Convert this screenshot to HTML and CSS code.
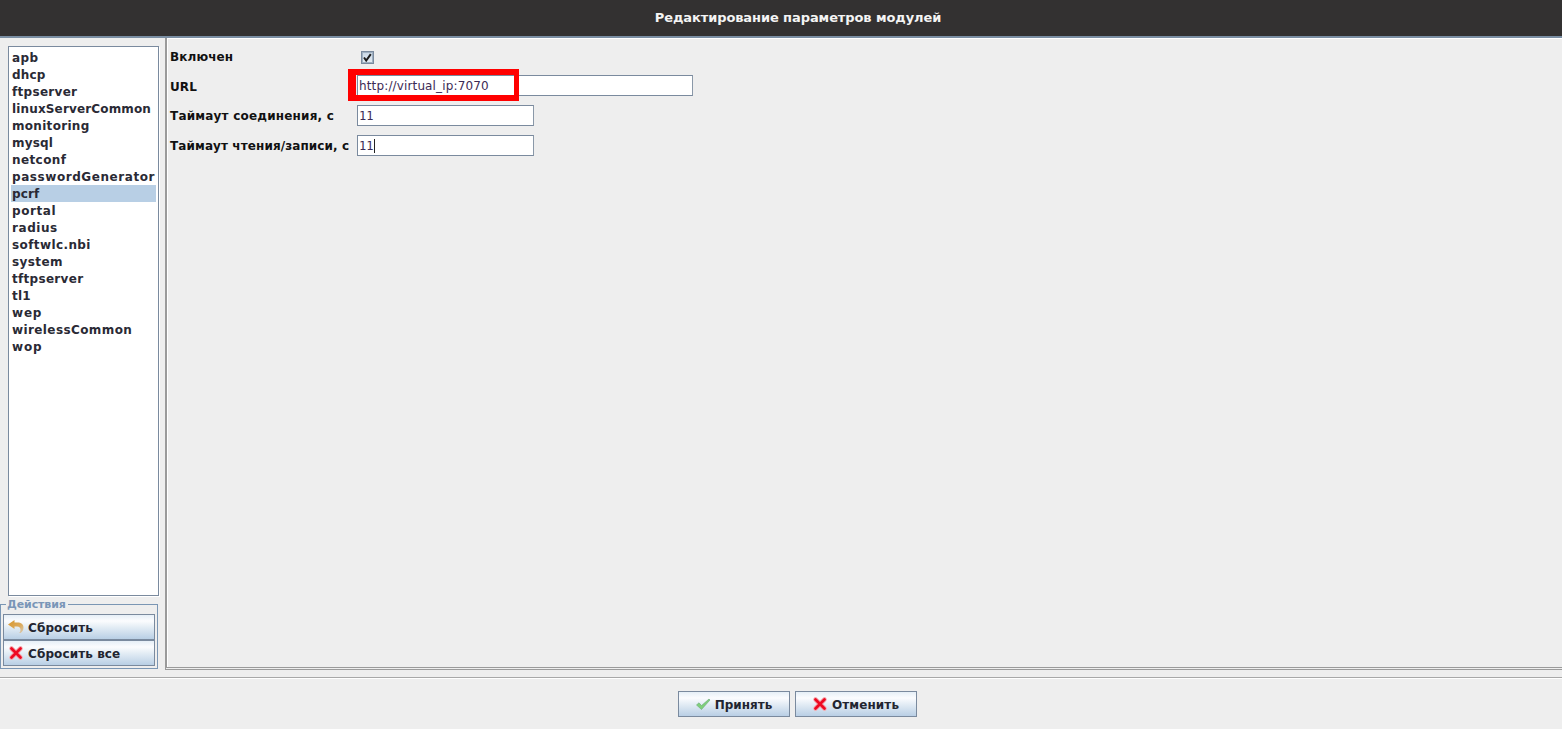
FILE: index.html
```html
<!DOCTYPE html>
<html lang="ru">
<head>
<meta charset="utf-8">
<title>Редактирование параметров модулей</title>
<link rel="stylesheet" href="styles.css">
</head>
<body>
<div class="app">
  <header class="titlebar">Редактирование параметров модулей</header>
  <div class="main">
    <aside class="side">
      <ul class="list">
        <li class="sp3">apb</li><li>dhcp</li><li class="sp2">ftpserver</li><li>linuxServerCommon</li><li class="sp2">monitoring</li><li>mysql</li><li class="sp3">netconf</li><li class="sp5">passwordGenerator</li><li class="sel">pcrf</li><li class="sp5">portal</li><li class="sp5">radius</li><li class="sp3">softwlc.nbi</li><li class="sp3">system</li><li class="sp2">tftpserver</li><li>tl1</li><li class="sp8">wep</li><li class="sp3">wirelessCommon</li><li class="sp8">wop</li>
      </ul>
      <fieldset class="actions">
        <legend>Действия</legend>
        <button class="btn side-btn" type="button">
          <svg class="ico" viewBox="0 0 16 16"><defs><linearGradient id="u" x1="0" y1="0" x2="1" y2="1"><stop offset="0" stop-color="#d8962c"/><stop offset=".6" stop-color="#dcaa5c"/><stop offset="1" stop-color="#d8cdb8"/></linearGradient></defs><path d="M6.500 1 0 5.500l6.500 4.500V7.500H9c2.500 0 3.500 1.500 3.500 3.500 0 1.200-.5 2.300-1.500 3h1.500c2-1 3-3 3-5.500C15.500 5 13 3.500 9.500 3.500h-3z" fill="url(#u)"/></svg>
          <span class="side-label">Сбросить</span>
        </button>
        <button class="btn side-btn" type="button">
          <svg class="ico" viewBox="0 0 16 16"><path d="M3.500 3.500 12.500 12.500M12.500 3.500 3.500 12.500" fill="none" stroke="#f3aab0" stroke-width="4.600" stroke-linecap="round"/><path d="M3.500 3.500 12.500 12.500M12.500 3.500 3.500 12.500" fill="none" stroke="#ee0a22" stroke-width="2.800" stroke-linecap="round"/></svg>
          <span class="side-label">Сбросить все</span>
        </button>
      </fieldset>
    </aside>
    <section class="content">
      <div class="form">
        <label class="lbl row1">Включен</label>
        <div class="row1"><span class="check"><svg viewBox="0 0 11 11"><path d="M2 5.500 4.200 8.500 8.800 2.200" fill="none" stroke="#1c1c1c" stroke-width="2"/></svg></span></div>
        <label class="lbl row2">URL</label>
        <div class="row2 field-wrap"><div class="field wide">http://virtual_ip:7070</div><div class="mark"></div></div>
        <label class="lbl row3">Таймаут соединения, с</label>
        <div class="row3"><div class="field narrow">11</div></div>
        <label class="lbl row4">Таймаут чтения/записи, с</label>
        <div class="row4"><div class="field narrow">11<span class="caret"></span></div></div>
      </div>
    </section>
  </div>
  <footer class="footer">
    <button class="btn foot-btn" type="button">
      <svg class="ico" viewBox="0 0 16 16"><path d="M1.500 9 4 6.800l2.500 2.800L14 3l1 1-8.500 9.500z" fill="#7fd07a" stroke="#6aa878" stroke-width=".6"/></svg>
      Принять
    </button>
    <button class="btn foot-btn" type="button">
      <svg class="ico" viewBox="0 0 16 16"><path d="M3.500 3.500 12.500 12.500M12.500 3.500 3.500 12.500" fill="none" stroke="#f3aab0" stroke-width="4.600" stroke-linecap="round"/><path d="M3.500 3.500 12.500 12.500M12.500 3.500 3.500 12.500" fill="none" stroke="#ee0a22" stroke-width="2.800" stroke-linecap="round"/></svg>
      <span class="cancel-label">Отменить</span>
    </button>
  </footer>
</div>
</body>
</html>
```
FILE: styles.css
```css
* { box-sizing: border-box; }
html, body { margin: 0; padding: 0; height: 100%; }
body {
  background: #eeeeee;
  font-family: "DejaVu Sans", sans-serif;
  font-size: 12px;
  font-weight: bold;
  color: #222;
  overflow: hidden;
}
.app { width: 1562px; height: 729px; display: flex; flex-direction: column; }
.titlebar {
  height: 38px;
  flex: none;
  background: #333131;
  border-bottom: 2px solid #7a8ea3;
  color: #f4f4f4;
  font-size: 13px;
  letter-spacing: -.09px;
  padding-left: 34px;
  padding-bottom: 2px;
  display: flex;
  align-items: center;
  justify-content: center;
}
.main { height: 632px; flex: none; display: flex; }
.side {
  width: 165px;
  flex: none;
  padding: 8px 6px 0 0;
  display: flex;
  flex-direction: column;
}
.list {
  list-style: none;
  margin: 0 0 0 8px;
  padding: 2px 2px 0 2px;
  width: 151px;
  height: 550px;
  background: #fff;
  border: 1px solid #7a8a9e;
  box-shadow: 1px 1px 0 #fff;
}
.list li { height: 17px; line-height: 19px; padding-left: 1px; white-space: nowrap; letter-spacing: .15px; color: #2a2a35; }
.list li.sp2 { letter-spacing: .3px; }
.list li.sp3 { letter-spacing: .4px; }
.list li.sp5 { letter-spacing: .57px; }
.list li.sp8 { letter-spacing: .8px; }
.list li.sel { background: #b8cfe5; }
.actions {
  margin: 4px 0 0 0;
  padding: 5px 2px 0;
  width: 158px;
  height: 69px;
  border: 1px solid #7a96b4;
  min-width: 0;
  display: flex;
  flex-direction: column;
}
.actions legend {
  padding: 0 2px 0 1px;
  margin-left: 3px;
  font-size: 11px;
  line-height: 9px;
  letter-spacing: -.1px;
  color: #7a96b8;
}
.btn {
  display: flex;
  align-items: center;
  font: inherit;
  color: #222530;
  border: 1px solid #7a8a9e;
  background: linear-gradient(#e6eff7 0, #fbfcfe 25%, #e4edf5 50%, #b9cfe5 100%);
  padding: 2px 0 0;
  cursor: pointer;
}
.side-btn { width: 152px; height: 26px; padding-left: 4px; gap: 4px; margin: 0; flex: none; }
.side-label { letter-spacing: .1px; }
.cancel-label { letter-spacing: .1px; }
.ico { width: 16px; height: 16px; flex: none; margin-top: -2px; }
.content {
  flex: 1;
  border-left: 2px solid #9a9a9a;
  border-bottom: 3px double #9a9a9a;
  box-shadow: inset 1px 1px 0 #fff;
  padding: 2px 3px;
}
.form {
  display: grid;
  grid-template-columns: 187px 1fr;
  grid-template-rows: 30px 30px 30px 30px;
}
.lbl { align-self: center; color: #111; white-space: nowrap; letter-spacing: .1px; }
.row1.lbl, .row2.lbl { padding-top: 4px; }
.row3.lbl, .row4.lbl { padding-top: 2px; }
.row3.lbl { letter-spacing: .2px; }
.form > div { align-self: center; }
.form > .row1 { padding-top: 4px; }
.check {
  display: flex;
  width: 13px;
  height: 13px;
  margin-left: 4px;
  border: 1px solid #7a8a9e;
  box-shadow: inset 0 0 0 1px #9fb0c2;
  background: linear-gradient(#c8d6e4, #e6eef6);
}
.check svg { width: 11px; height: 11px; }
.field-wrap { position: relative; }
.field {
  height: 21px;
  background: #fff;
  border: 1px solid #7a8a9e;
  border-right-color: #8a98a8;
  font-weight: normal;
  font-size: 12px;
  line-height: 20px;
  padding-left: 1px;
  color: #3c2a55;
  letter-spacing: .14px;
}
.wide { width: 336px; }
.narrow { width: 177px; font-family: "DejaVu Sans Mono", monospace; font-size: 12px; letter-spacing: 0; }
.caret { display: inline-block; width: 1px; height: 14px; background: #222; vertical-align: -3px; margin-left: 1px; }
.mark {
  position: absolute;
  left: -9px;
  top: -6px;
  width: 171px;
  height: 32px;
  border: 6px solid #ff0000;
  border-left-width: 8px;
  border-right-width: 5px;
  pointer-events: none;
}
.footer {
  flex: none;
  margin-top: 7px;
  border-top: 1px solid #a8a8a8;
  box-shadow: inset 0 1px 0 #fff;
  height: 52px;
  display: flex;
  justify-content: center;
  gap: 5px;
  padding-top: 13px;
  padding-left: 32px;
}
.foot-btn { height: 26px; justify-content: center; gap: 4px; }
.foot-btn:first-child { width: 112px; }
.foot-btn:last-child { width: 122px; }
```
